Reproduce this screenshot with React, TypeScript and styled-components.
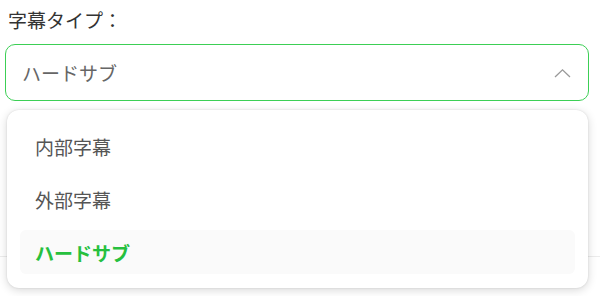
import styled, { createGlobalStyle } from 'styled-components';

const GlobalStyle = createGlobalStyle`
    html, body {
        margin: 0;
        padding: 0;
        background: #ffffff;
        font-family: "Noto Sans CJK JP", "Noto Sans", sans-serif;
    }
`;

const Page = styled.div`
    width: 600px;
    height: 296px;
    overflow: hidden;
    position: relative;
    box-sizing: border-box;
    padding: 8px 11px 0 5px;
`;

const Label = styled.div`
    margin-left: 3px;
    font-size: 19px;
    line-height: 24px;
    color: #333333;
`;

const Field = styled.div`
    position: relative;
    margin-top: 12px;
`;

const SelectBox = styled.div`
    height: 57px;
    box-sizing: border-box;
    border: 1px solid #3ccf55;
    border-radius: 10px;
    display: flex;
    align-items: center;
    justify-content: space-between;
    padding: 0 17px 0 16px;
    background: #fff;
`;

const Value = styled.span`
    font-size: 19px;
    color: #666666;
`;

const Divider = styled.div`
    position: absolute;
    left: -5px;
    right: -11px;
    top: 212px;
    height: 1px;
    background: #ececec;
`;

const Menu = styled.ul`
    position: absolute;
    top: 66px;
    left: 2px;
    width: 581px;
    margin: 0;
    box-sizing: border-box;
    list-style: none;
    padding: 14px 13px;
    display: flex;
    flex-direction: column;
    gap: 9px;
    background: #ffffff;
    border-radius: 12px;
    box-shadow: 0 2px 10px rgba(0, 0, 0, 0.16), 0 0 2px rgba(0, 0, 0, 0.12);
`;

const Option = styled.li<{ $selected?: boolean }>`
    height: 44px;
    display: flex;
    align-items: center;
    padding-left: 15px;
    border-radius: 6px;
    font-size: 19px;
    color: ${(p) => (p.$selected ? '#26c03e' : '#555555')};
    font-weight: ${(p) => (p.$selected ? 700 : 400)};
    background: ${(p) => (p.$selected ? '#fafafa' : 'transparent')};
`;

const Chevron = () => (
    <svg width="17" height="10" viewBox="0 0 17 10" fill="none">
        <path d="M1 9 L8.5 1.8 L16 9" stroke="#999999" strokeWidth="1.3" />
    </svg>
);

const options = ['内部字幕', '外部字幕', 'ハードサブ'];

export default function App() {
    const selected = 'ハードサブ';
    return (
        <>
            <GlobalStyle />
            <Page>
                <Label>字幕タイプ：</Label>
                <Field>
                    <SelectBox>
                        <Value>{selected}</Value>
                        <Chevron />
                    </SelectBox>
                    <Divider />
                    <Menu>
                        {options.map((o) => (
                            <Option key={o} $selected={o === selected}>
                                {o}
                            </Option>
                        ))}
                    </Menu>
                </Field>
            </Page>
        </>
    );
}
